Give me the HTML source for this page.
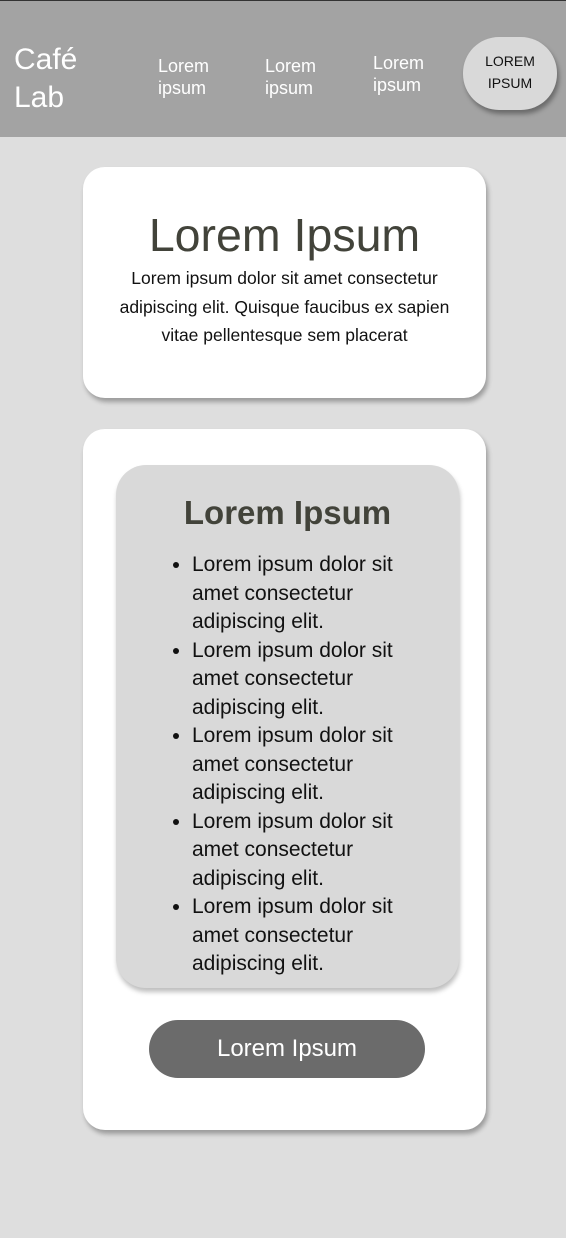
<!DOCTYPE html>
<html><head><style>
*{margin:0;padding:0;box-sizing:border-box}
body{width:566px;height:1238px;background:#dedede;font-family:"Liberation Sans",sans-serif;position:relative;overflow:hidden}
.hdr{position:absolute;left:0;top:0;width:566px;height:137px;background:#a3a3a3;border-top:1px solid #333}
.logo{position:absolute;left:14px;top:40px;color:#fff;font-size:30px;line-height:38px}
.nav{position:absolute;color:#fff;font-size:18px;line-height:22px}
.pill{position:absolute;left:463px;top:36px;width:94px;height:73px;border-radius:36px;background:#d9d9d9;box-shadow:2px 4px 5px rgba(0,0,0,.35);color:#111;font-size:14px;line-height:22px;text-align:center;padding-top:13px}
.card{position:absolute;left:83px;width:403px;background:#fff;border-radius:22px;box-shadow:2px 4px 5px rgba(0,0,0,.3)}
.t1{text-align:center;color:#42433a;font-size:46.5px;margin-top:43px;line-height:50px}
.p1{text-align:center;color:#111;font-size:17.5px;line-height:28.5px;margin-top:4px;white-space:nowrap}
.inner{position:absolute;left:33px;top:36px;width:343px;height:523px;background:#d9d9d9;border-radius:30px;box-shadow:1px 4px 5px rgba(0,0,0,.25)}
.t2{text-align:center;color:#42433a;font-size:33px;font-weight:bold;margin-top:28px;line-height:40px}
ul{margin-top:18px;padding-left:76px;color:#111;font-size:21px;line-height:28.5px;width:300px}
.btn{position:absolute;left:66px;top:591px;width:276px;height:58px;border-radius:29px;background:#6b6b6b;color:#fff;font-size:24px;text-align:center;line-height:58px}
</style></head><body>
<div class="hdr">
<div class="logo">Café<br>Lab</div>
<div class="nav" style="left:158px;top:54px">Lorem<br>ipsum</div>
<div class="nav" style="left:265px;top:54px">Lorem<br>ipsum</div>
<div class="nav" style="left:373px;top:51px">Lorem<br>ipsum</div>
<div class="pill">LOREM<br>IPSUM</div>
</div>
<div class="card" style="top:167px;height:231px">
<div class="t1">Lorem Ipsum</div>
<div class="p1">Lorem ipsum dolor sit amet consectetur<br>adipiscing elit. Quisque faucibus ex sapien<br>vitae pellentesque sem placerat</div>
</div>
<div class="card" style="top:429px;height:701px">
<div class="inner">
<div class="t2">Lorem Ipsum</div>
<ul>
<li>Lorem ipsum dolor sit<br>amet consectetur<br>adipiscing elit.</li>
<li>Lorem ipsum dolor sit<br>amet consectetur<br>adipiscing elit.</li>
<li>Lorem ipsum dolor sit<br>amet consectetur<br>adipiscing elit.</li>
<li>Lorem ipsum dolor sit<br>amet consectetur<br>adipiscing elit.</li>
<li>Lorem ipsum dolor sit<br>amet consectetur<br>adipiscing elit.</li>
</ul>
</div>
<div class="btn">Lorem Ipsum</div>
</div>
</body></html>
